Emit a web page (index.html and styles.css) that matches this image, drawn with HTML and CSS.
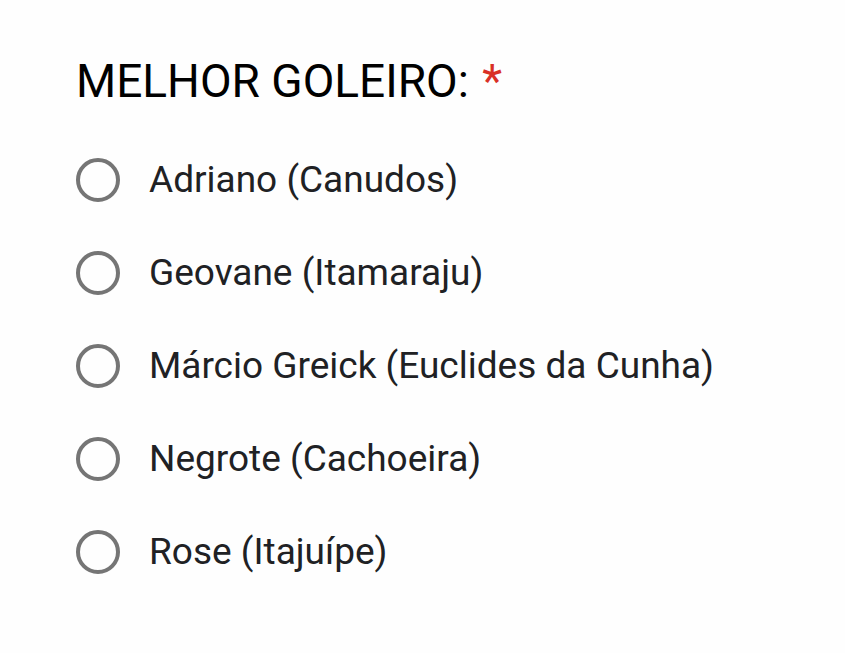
FILE: index.html
```html
<!DOCTYPE html>
<html lang="pt">
<head>
    <meta charset="UTF-8">
    <title>Melhor goleiro</title>
    <link rel="stylesheet" href="styles.css">
</head>
<body>
    <div class="question">
        <div class="title">MELHOR GOLEIRO: <span class="req">*</span></div>
        <div class="options">
            <label class="option"><span class="radio"></span><span class="text">Adriano (Canudos)</span></label>
            <label class="option"><span class="radio"></span><span class="text">Geovane (Itamaraju)</span></label>
            <label class="option"><span class="radio"></span><span class="text">Márcio Greick (Euclides da Cunha)</span></label>
            <label class="option"><span class="radio"></span><span class="text">Negrote (Cachoeira)</span></label>
            <label class="option"><span class="radio"></span><span class="text">Rose (Itajuípe)</span></label>
        </div>
    </div>
</body>
</html>
```

FILE: styles.css
```css
body {
    margin: 0;
    background-color: #fefefe;
    font-family: Roboto, "Liberation Sans", sans-serif;
    color: #202124;
}
.question {
    padding: 51px 0 0 76px;
}
.title {
    font-size: 46px;
    line-height: 60px;
    color: #000;
}
.req {
    color: #d93025;
    margin-left: 2px;
}
.options {
    display: flex;
    flex-direction: column;
    margin-top: 22px;
}
.option {
    display: flex;
    align-items: center;
    height: 93px;
}
.radio {
    width: 36px;
    height: 36px;
    border: 4px solid #757575;
    border-radius: 50%;
    flex-shrink: 0;
}
.text {
    margin-left: 29px;
    font-size: 37px;
}
```
